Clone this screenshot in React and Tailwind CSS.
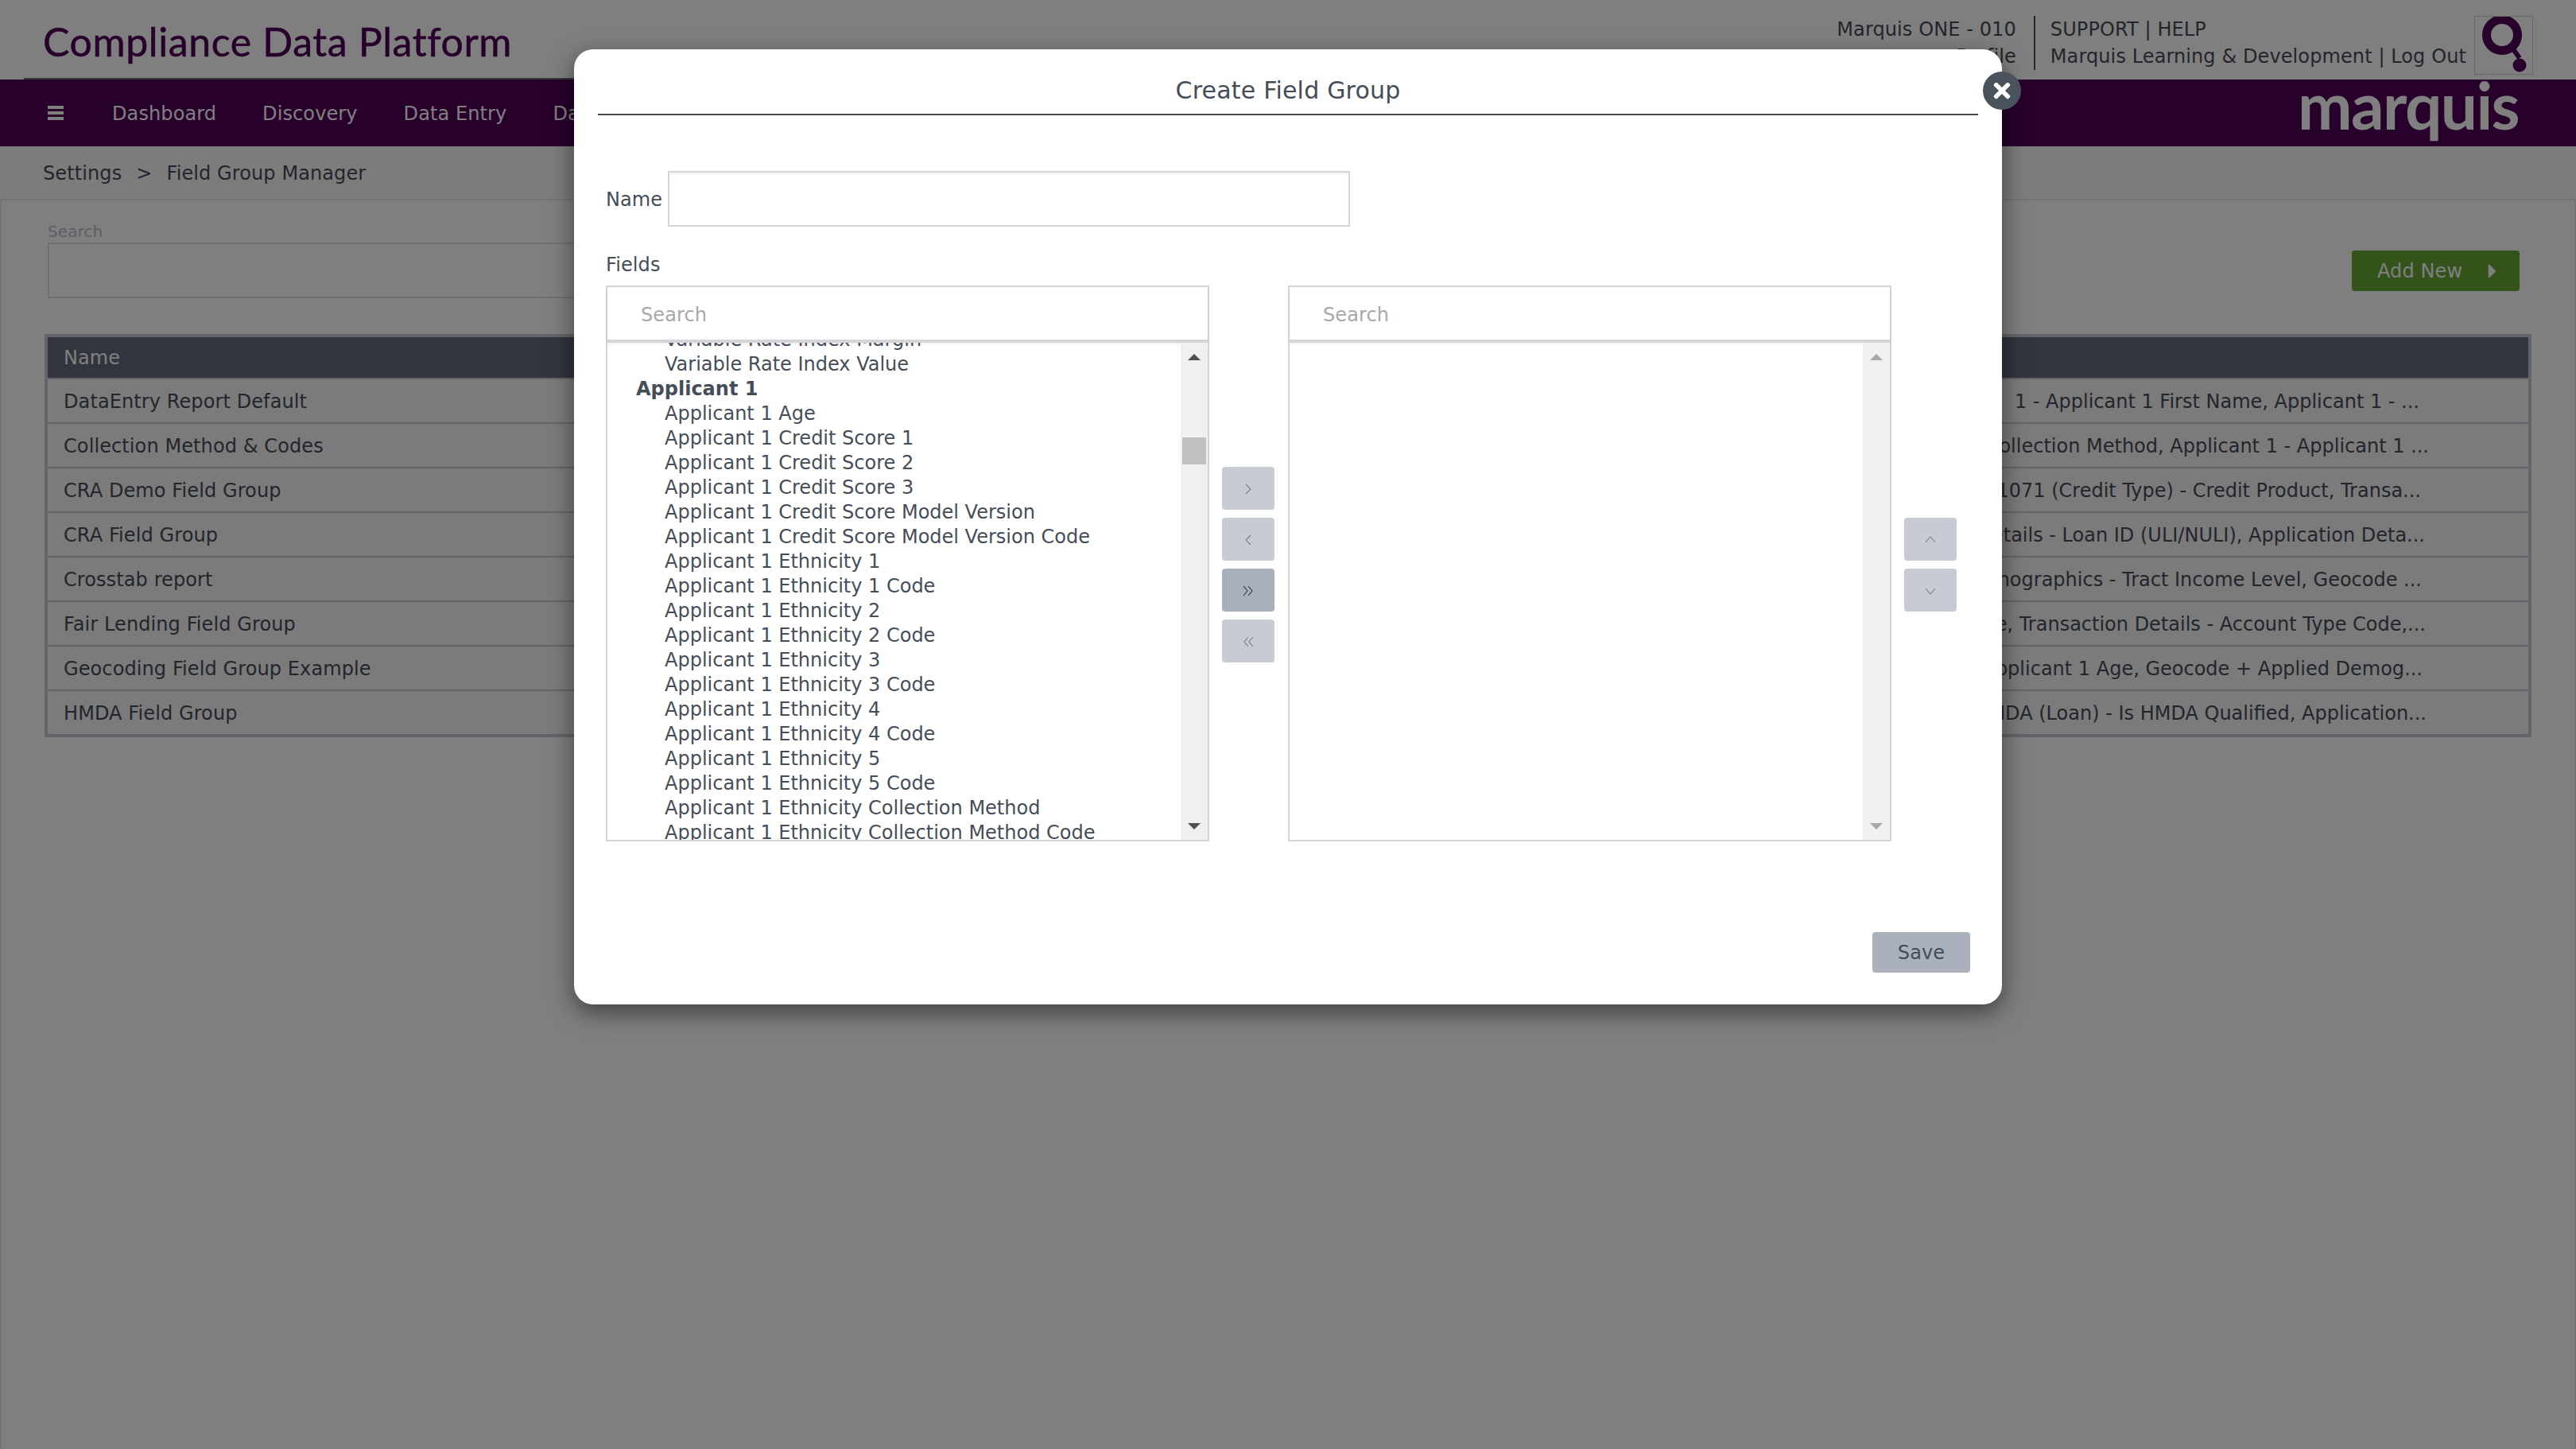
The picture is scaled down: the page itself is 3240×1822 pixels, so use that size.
import React from 'react';
import { FaTimes, FaCaretRight } from 'react-icons/fa';

const fieldGroups = [
    { name: 'DataEntry Report Default', fields: '1 - Applicant 1 First Name, Applicant 1 - ...', end: 'pr-[137px]' },
    { name: 'Collection Method & Codes', fields: 'Collection Method, Applicant 1 - Applicant 1 ...', end: 'pr-[125px]' },
    { name: 'CRA Demo Field Group', fields: '1071 (Credit Type) - Credit Product, Transa...', end: 'pr-[135px]' },
    { name: 'CRA Field Group', fields: 'Application Details - Loan ID (ULI/NULI), Application Deta...', end: 'pr-[130px]' },
    { name: 'Crosstab report', fields: 'Demographics - Tract Income Level, Geocode ...', end: 'pr-[134px]' },
    { name: 'Fair Lending Field Group', fields: 'Type, Transaction Details - Account Type Code,...', end: 'pr-[129px]' },
    { name: 'Geocoding Field Group Example', fields: 'Applicant 1 Age, Geocode + Applied Demog...', end: 'pr-[133px]' },
    { name: 'HMDA Field Group', fields: 'HMDA (Loan) - Is HMDA Qualified, Application...', end: 'pr-[128px]' },
];

const availableFields = [
    'Variable Rate Index Margin',
    'Variable Rate Index Value',
    { group: 'Applicant 1' },
    'Applicant 1 Age',
    'Applicant 1 Credit Score 1',
    'Applicant 1 Credit Score 2',
    'Applicant 1 Credit Score 3',
    'Applicant 1 Credit Score Model Version',
    'Applicant 1 Credit Score Model Version Code',
    'Applicant 1 Ethnicity 1',
    'Applicant 1 Ethnicity 1 Code',
    'Applicant 1 Ethnicity 2',
    'Applicant 1 Ethnicity 2 Code',
    'Applicant 1 Ethnicity 3',
    'Applicant 1 Ethnicity 3 Code',
    'Applicant 1 Ethnicity 4',
    'Applicant 1 Ethnicity 4 Code',
    'Applicant 1 Ethnicity 5',
    'Applicant 1 Ethnicity 5 Code',
    'Applicant 1 Ethnicity Collection Method',
    'Applicant 1 Ethnicity Collection Method Code',
];

const angles = {
    right: ['M4 1l6 6-6 6'],
    left: ['M10 1L4 7l6 6'],
    up: ['M1 10l6-7 6 7'],
    down: ['M1 4l6 7 6-7'],
    doubleRight: ['M1 1l5 6-5 6', 'M7 1l5 6-5 6'],
    doubleLeft: ['M7 1L2 7l5 6', 'M13 1L8 7l5 6'],
};

function Angle({ name }) {
    return (
        <svg width="14" height="14" viewBox="0 0 14 14" fill="none" stroke="currentColor" strokeWidth="1.1">
            {angles[name].map((d) => <path key={d} d={d} />)}
        </svg>
    );
}

function MoveButton({ icon, active }) {
    return (
        <button className={`flex h-[54px] w-[66px] items-center justify-center rounded-[4px] pt-[2px] ${active ? 'bg-[#a9b0bc] text-[#2f343c]' : 'bg-[#c7ccd4] text-[#757b85]'}`}>
            <Angle name={icon} />
        </button>
    );
}

function Triangle({ down, color }) {
    return (
        <svg className="mx-auto block" width="16" height="8" viewBox="0 0 16 8" fill={color}>
            <polygon points={down ? '0,0 16,0 8,8' : '8,0 16,8 0,8'} />
        </svg>
    );
}

function ListBox({ items, scrollable }) {
    const arrow = scrollable ? '#505050' : '#a8a8a8';
    return (
        <div className="flex h-[699px] w-[759px] flex-col border-2 border-[#d3d4d6]">
            <div className="flex h-[70px] shrink-0 items-center border-b-4 border-[#d3d5d8] pt-[3px] pl-[42px] text-[#a8a8a8] shadow-[0_2px_3px_rgba(0,0,0,0.06)]">Search</div>
            <div className="flex min-h-0 flex-1">
                <div className="min-w-0 flex-1 overflow-hidden tracking-normal">
                    <div className="-mt-[19px]">
                        {items.map((item) => item.group
                            ? <div key={item.group} className="h-[31px] pl-[36px] leading-[31px] font-bold">{item.group}</div>
                            : <div key={item} className="h-[31px] pl-[72px] leading-[31px] whitespace-nowrap">{item}</div>)}
                    </div>
                </div>
                <div className="flex w-[34px] shrink-0 flex-col bg-[#f0f0f0] pt-[14px] pb-[13px]">
                    <Triangle color={arrow} />
                    {scrollable && <div className="mx-[2px] mt-[97px] h-[34px] bg-[#c0c0c0]" />}
                    <div className="mt-auto"><Triangle down color={arrow} /></div>
                </div>
            </div>
        </div>
    );
}

function QuestionMark() {
    return (
        <svg width="72" height="71" viewBox="0 0 72 71" fill="none">
            <circle cx="34" cy="23" r="19.5" stroke="#4f0058" strokeWidth="11" />
            <path d="M46 38l10 14" stroke="#4f0058" strokeWidth="6" />
            <circle cx="56" cy="61" r="8.5" fill="#4f0058" />
        </svg>
    );
}

export default function App() {
    return (
        <div className="relative h-[1822px] overflow-hidden bg-white text-[24px] tracking-[0.1px] text-[#454d59] [font-family:'DejaVu_Sans',sans-serif]">
            {/* PAGE BEHIND THE DIALOG */}
            <header className="relative flex h-[100px] items-start justify-between">
                <h1 className="ml-[54px] pt-[23px] text-[50px] leading-[58px] tracking-[0.6px] text-[#4f0058] [-webkit-text-stroke:0.5px_#4f0058] [font-family:Lato,sans-serif]">Compliance Data Platform</h1>
                <div className="mr-[54px] flex pt-[20px]">
                    <div className="flex h-[68px] flex-col justify-between py-[2px] text-right leading-[30px]">
                        <span>Marquis ONE - 010</span>
                        <span>Profile</span>
                    </div>
                    <div className="mr-[19px] ml-[22px] h-[68px] w-[2px] bg-[#454d59]" />
                    <div className="flex h-[68px] flex-col justify-between py-[2px] leading-[30px]">
                        <span>SUPPORT | HELP</span>
                        <span>Marquis Learning &amp; Development | Log Out</span>
                    </div>
                    <div className="ml-[10px] h-[74px] w-[74px] border border-[#d0d0d0]"><QuestionMark /></div>
                </div>
                <div className="absolute bottom-0 left-[30px] h-[2px] w-[1000px] bg-[#6e7277]" />
            </header>

            <nav className="flex h-[84px] items-center justify-between bg-[#4f0058] text-white">
                <div className="flex items-center">
                    <div className="ml-[60px] flex h-[18px] w-[20px] flex-col justify-between">
                        <span className="h-[4px] bg-white" />
                        <span className="h-[4px] bg-white" />
                        <span className="h-[4px] bg-white" />
                    </div>
                    <div className="ml-[61px] flex gap-[58px] pt-[2px]">
                        <span>Dashboard</span>
                        <span>Discovery</span>
                        <span>Data Entry</span>
                        <span>Data</span>
                    </div>
                </div>
                <div className="mr-[72px] pb-[22px] text-[82px] leading-[72px] font-bold tracking-[-0.02em] [font-family:Lato,sans-serif]">marquis</div>
            </nav>

            <div className="flex h-[66px] items-center gap-[18px] bg-[#f8f9fb] pt-[2px] pl-[54px]">
                <span>Settings</span>
                <span>&gt;</span>
                <span>Field Group Manager</span>
            </div>

            <main className="h-[1572px] border-x-2 border-t-2 border-[#e6e6e6] pt-[28px]">
                <div className="flex items-end justify-between pr-[69px] pl-[58px]">
                    <div>
                        <label className="block text-[20px] leading-[22px] text-[#b9bfc9]">Search</label>
                        <div className="mt-[3px] h-[70px] w-[1000px] border-2 border-[#dedede]" />
                    </div>
                    <button className="mb-[9px] flex h-[51px] w-[211px] items-center rounded-[4px] bg-[#66a636] pl-[32px] text-white">
                        Add New
                        <FaCaretRight className="ml-[24px] text-[28px]" />
                    </button>
                </div>

                <div className="mt-[45px] mr-[54px] ml-[54px] border-4 border-[#c8cbd5]">
                    <div className="flex h-[51px] items-center bg-[#646a7a] pl-[20px] text-white">Name</div>
                    {fieldGroups.map((row) => (
                        <div key={row.name} className="flex h-[56px] items-center justify-between border-t-2 border-[#c8cbd5] bg-[#f6f6f6] pt-[2px] pl-[20px] whitespace-nowrap first:h-[57px]">
                            <span>{row.name}</span>
                            <span className={`tracking-normal ${row.end}`}>{row.fields}</span>
                        </div>
                    ))}
                </div>
            </main>

            {/* DIALOG */}
            <div className="absolute inset-0 bg-black/50" />
            <div className="absolute top-[62px] left-[722px] w-[1796px] rounded-[24px] bg-white shadow-[0_10px_30px_rgba(0,0,0,0.5)]">
                <div className="mx-[30px] flex h-[83px] items-center justify-center border-b-2 border-[#414b56] pt-[21px] text-[30px] tracking-[0.2px]">Create Field Group</div>
                <button className="absolute top-[28px] -right-[24px] flex h-[48px] w-[48px] items-center justify-center rounded-full bg-[#4a535c] text-[30px] text-white">
                    <FaTimes />
                </button>

                <div className="mt-[70px] ml-[40px] flex items-center">
                    <label className="w-[78px] pt-[2px]">Name</label>
                    <div className="h-[70px] w-[858px] border-2 border-[#d3d4d6] shadow-[inset_0_2px_2px_rgba(0,0,0,0.06)]" />
                </div>

                <label className="mt-[33px] ml-[40px] block leading-[30px]">Fields</label>

                <div className="mt-[11px] ml-[40px] flex">
                    <ListBox items={availableFields} scrollable />
                    <div className="flex w-[99px] flex-col gap-[10px] pt-[228px] pl-[16px]">
                        <MoveButton icon="right" />
                        <MoveButton icon="left" />
                        <MoveButton icon="doubleRight" active />
                        <MoveButton icon="doubleLeft" />
                    </div>
                    <ListBox items={[]} />
                    <div className="flex flex-col gap-[10px] pt-[292px] pl-[16px]">
                        <MoveButton icon="up" />
                        <MoveButton icon="down" />
                    </div>
                </div>

                <div className="mt-[114px] flex justify-end pr-[40px] pb-[40px]">
                    <button className="h-[51px] w-[123px] rounded-[4px] bg-[#aab1bc]">Save</button>
                </div>
            </div>
        </div>
    );
}
